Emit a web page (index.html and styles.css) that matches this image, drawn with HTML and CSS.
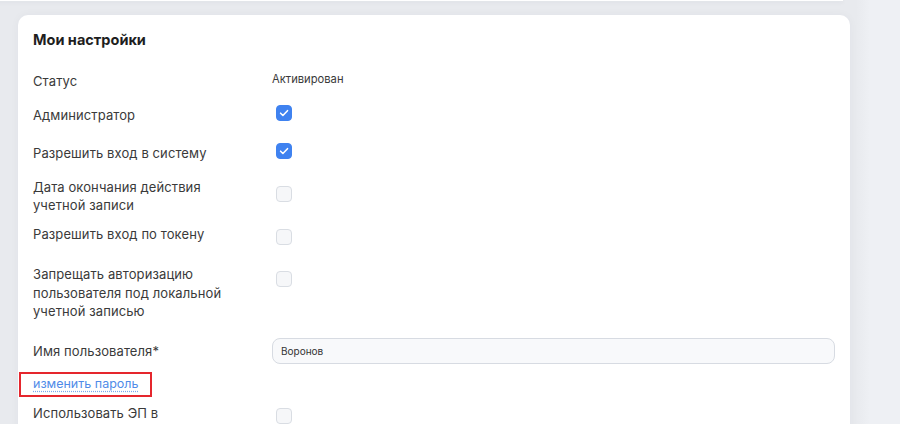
FILE: index.html
```html
<!DOCTYPE html>
<html lang="ru">
<head>
    <meta charset="UTF-8">
    <meta name="viewport" content="width=device-width, initial-scale=1.0">
    <title>Мои настройки</title>
    <link rel="stylesheet" href="styles.css">
</head>
<body>
    <div class="page">
        <div class="card-prev"></div>
        <div class="card">
            <h2>Мои настройки</h2>
            <div class="fields">
                <div class="field gap-m">
                    <div class="label">Статус</div>
                    <div class="value">Активирован</div>
                </div>
                <div class="field gap-l">
                    <div class="label">Администратор</div>
                    <div><span class="check on"></span></div>
                </div>
                <div class="field gap-m">
                    <div class="label">Разрешить вход в систему</div>
                    <div><span class="check on"></span></div>
                </div>
                <div class="field gap-s multi">
                    <div class="label">Дата окончания действия учетной записи</div>
                    <div><span class="check"></span></div>
                </div>
                <div class="field gap-l">
                    <div class="label">Разрешить вход по токену</div>
                    <div><span class="check"></span></div>
                </div>
                <div class="field gap-ml multi3">
                    <div class="label">Запрещать авторизацию пользователя под локальной учетной записью</div>
                    <div><span class="check"></span></div>
                </div>
                <div class="field gap-xs input-row">
                    <div class="label">Имя пользователя*</div>
                    <div><input class="text-input" type="text" value="Воронов"></div>
                </div>
                <div class="link-row">
                    <a class="change-pass" href="#">изменить пароль</a>
                </div>
                <div class="field">
                    <div class="label">Использовать ЭП в</div>
                    <div><span class="check"></span></div>
                </div>
            </div>
        </div>
    </div>
</body>
</html>
```

FILE: styles.css
```css
body {
    margin: 0;
    font-family: Inter, "Noto Sans", sans-serif;
    background: linear-gradient(to right, #e8eaee 0, #e8eaee 856px, #eef0f4 870px);
    color: #363636;
    height: 424px;
    overflow: hidden;
}

.page {
    padding-left: 18px;
    width: 832px;
}

.card-prev {
    height: 1px;
    margin-left: -30px;
    width: 855px;
    background: #fff;
    box-shadow: 0 1px 4px rgba(40, 50, 70, 0.12);
}

.card {
    margin-top: 14px;
    background-color: #fff;
    border-radius: 10px;
    padding: 15px 15px 0;
    box-shadow: 0 0 10px rgba(40, 50, 70, 0.04);
    height: 420px;
}

h2 {
    margin: 0 0 22px;
    font-size: 14.5px;
    line-height: 20px;
    font-weight: 700;
    color: #1e1e1e;
}

.field {
    display: grid;
    grid-template-columns: 205px 1fr;
    column-gap: 34px;
    align-items: start;
}

.gap-xs {
    margin-bottom: 8px;
}

.gap-s {
    margin-bottom: 11px;
}

.gap-m {
    margin-bottom: 16px;
}

.gap-ml {
    margin-bottom: 17px;
}

.gap-l {
    margin-bottom: 20px;
}

.label {
    font-size: 13px;
    line-height: 18px;
    letter-spacing: 0.1px;
    color: #3a3a3a;
}

.multi3 .label {
    line-height: 18.5px;
}

.value {
    font-size: 11.2px;
    line-height: 14px;
    color: #3a3a3a;
}

.check {
    display: block;
    width: 14px;
    height: 14px;
    margin-top: 4px;
    margin-left: 4px;
    border: 1px solid #d9dde3;
    border-radius: 4px;
    background-color: #f6f7f9;
}

.check.on {
    margin-top: -1px;
    border-color: #3f82f0;
    background: #3f82f0 url("data:image/svg+xml,%3Csvg xmlns='http://www.w3.org/2000/svg' width='14' height='14' viewBox='0 0 14 14'%3E%3Cpath d='M3.6 7.2l2.3 2.3 4.6-4.8' fill='none' stroke='%23fff' stroke-width='1.6' stroke-linecap='round' stroke-linejoin='round'/%3E%3C/svg%3E") center no-repeat;
}

.multi .check {
    margin-top: 8px;
}

.multi3 .check {
    margin-top: 6px;
}

.input-row {
    align-items: center;
}

.text-input {
    box-sizing: border-box;
    width: 563px;
    height: 26px;
    padding: 0 8px;
    border: 1px solid #d7dbe2;
    border-radius: 8px;
    background-color: #f8f9fb;
    font-family: Inter, "Noto Sans", sans-serif;
    font-size: 10px;
    color: #333;
}

.link-row {
    margin-left: -14px;
    margin-bottom: 7px;
}

.change-pass {
    display: inline-block;
    padding: 2px 12px 3px;
    border: 2px solid #e5262d;
    font-size: 12.5px;
    line-height: 16px;
    color: #4f8be8;
    text-decoration: underline dotted #7aa7ee;
    text-underline-offset: 3px;
}
```
